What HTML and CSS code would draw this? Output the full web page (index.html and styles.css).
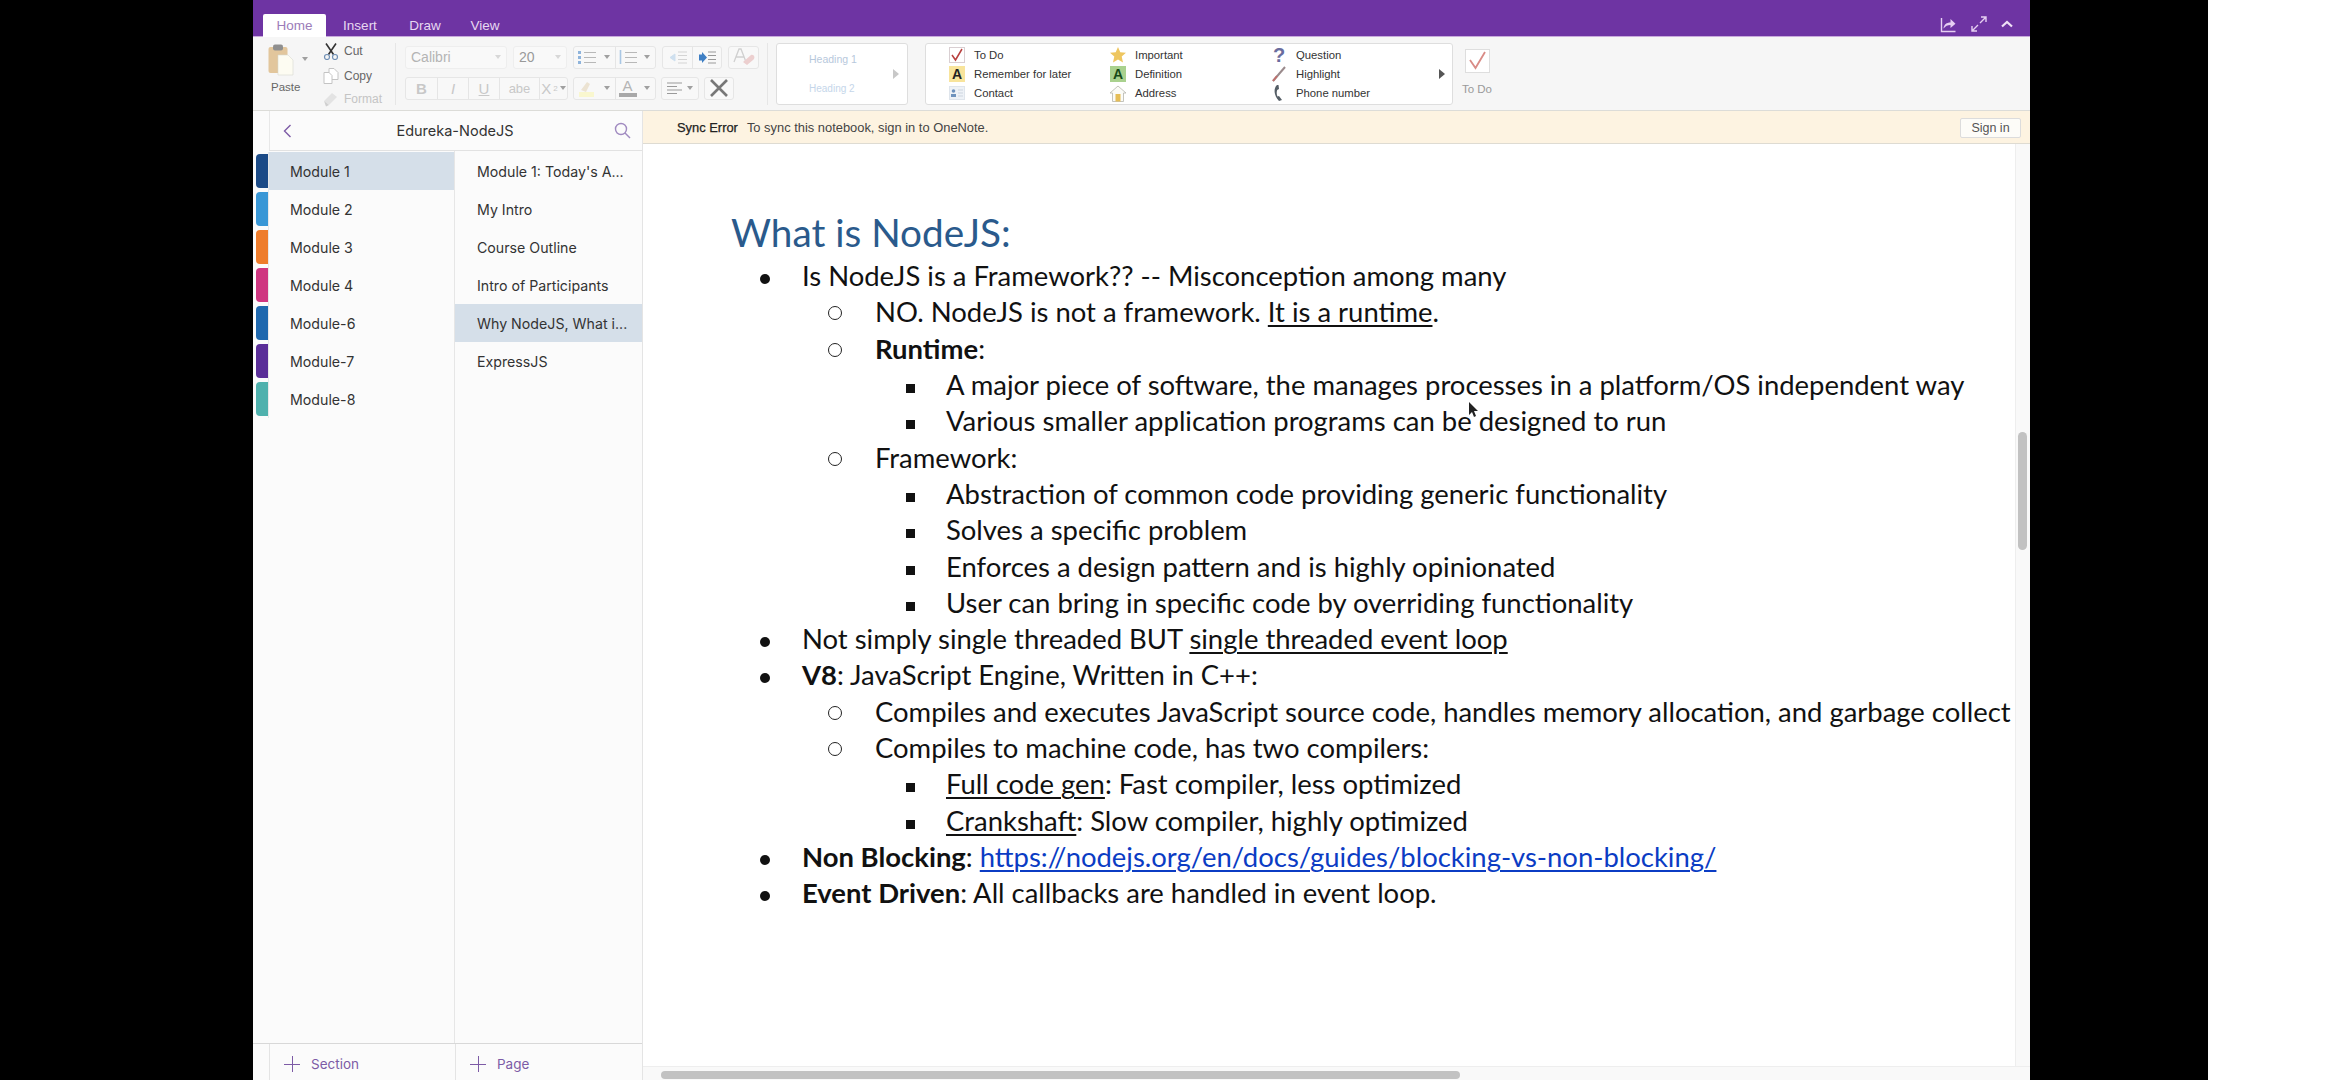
FILE: index.html
```html
<!DOCTYPE html>
<html lang="en">
  <head>
    <meta charset="UTF-8" />
    <meta name="viewport" content="width=device-width, initial-scale=1.0" />
    <title>Edureka-NodeJS - OneNote</title>
    <link rel="stylesheet" href="styles.css">
  </head>
  <body>
    <div class="app">
      <header class="titlebar">
        <nav class="tabs">
          <a class="tab active">Home</a>
          <a class="tab">Insert</a>
          <a class="tab">Draw</a>
          <a class="tab">View</a>
        </nav>
        <div class="window-actions">
          <svg width="17" height="17" viewBox="0 0 17 17" fill="none" stroke="#e6cff2" stroke-width="1.4"><path d="M1.5 2v13.5h14"/><path d="M3.5 12.5c.5-4 3-6 7-6V3l5 4.7-5 4.3V9c-3 0-5 1-7 3.5z" fill="#e6cff2" stroke="none"/></svg>
          <svg width="16" height="16" viewBox="0 0 16 16" fill="none" stroke="#e6cff2" stroke-width="1.4"><path d="M9 7l6-6M10 1h5v5M7 9l-6 6M1 10v5h5"/></svg>
          <svg width="12" height="8" viewBox="0 0 12 8" fill="none" stroke="#efe0f6" stroke-width="2.2"><path d="M1 6.5l5-4.5 5 4.5"/></svg>
        </div>
      </header>

      <section class="ribbon">
        <div class="clipboard">
          <div class="paste">
            <svg width="26" height="32" viewBox="0 0 26 32"><rect x="0.5" y="3" width="19" height="26" rx="2" fill="#e2c69c"/><rect x="5" y="0.5" width="10" height="6" rx="2" fill="#8f8f8f"/><path d="M10 11h10l5 5v15H10z" fill="#fdfcf2" stroke="#d8d8d0" stroke-width="0.6"/></svg>
            <span class="caret"></span>
            <span class="paste-label">Paste</span>
          </div>
          <ul class="clip-list">
            <li>
              <svg width="16" height="17" viewBox="0 0 16 17" fill="none"><path d="M3 0.5l7.5 11M13 0.5L5.5 11.500" stroke="#333" stroke-width="1.6"/><circle cx="4" cy="14" r="2.500" stroke="#6f8fb5" stroke-width="1.200"/><circle cx="12" cy="14" r="2.500" stroke="#6f8fb5" stroke-width="1.200"/></svg>
              <span>Cut</span>
            </li>
            <li>
              <svg width="16" height="16" viewBox="0 0 16 16" fill="#fff" stroke="#c4c4c4"><path d="M6 .5h5l4 4v7H6z"/><path d="M1 4.500h5l3 3v8H1z"/></svg>
              <span>Copy</span>
            </li>
            <li class="muted">
              <svg width="16" height="15" viewBox="0 0 16 15"><path d="M1 9l8-8 5 4-8 8z" fill="#e3e3e3"/><path d="M1 9l5 4-3 1.500z" fill="#cfcfcf"/></svg>
              <span>Format</span>
            </li>
          </ul>
        </div>

        <div class="formatting">
          <div class="tool-row">
            <div class="tool-group font-name"><span>Calibri</span><span class="caret light"></span></div>
            <div class="tool-group font-size"><span>20</span><span class="caret light"></span></div>
            <div class="tool-group">
              <span class="tool wide">
                <svg width="18" height="14" viewBox="0 0 18 14"><g fill="#8fb4dc"><rect x="0" y="1" width="3" height="3"/><rect x="0" y="6" width="3" height="3"/><rect x="0" y="11" width="3" height="3"/></g><path d="M6 2.500h12M6 7.500h12M6 12.500h12" stroke="#b8b8b8" stroke-width="1.200"/></svg>
              </span>
              <span class="tool narrow"><span class="caret"></span></span>
              <span class="tool wide">
                <svg width="18" height="14" viewBox="0 0 18 14"><path d="M1.500 0v14" stroke="#a9c7e4" stroke-width="1.600"/><path d="M6 2.500h12M6 7.500h12M6 12.500h12" stroke="#b8b8b8" stroke-width="1.200"/></svg>
              </span>
              <span class="tool narrow"><span class="caret"></span></span>
            </div>
            <div class="tool-group">
              <span class="tool indent">
                <svg width="18" height="13" viewBox="0 0 18 13"><path d="M6 6.500l-5 0M6 3L1 6.500 6 10z" fill="#cfe0ef" stroke="#cfe0ef"/><path d="M9 1h9M9 4.500h9M9 8.500h9M9 12h9" stroke="#d4d4d4" stroke-width="1.200"/></svg>
              </span>
              <span class="tool indent">
                <svg width="18" height="13" viewBox="0 0 18 13"><path d="M1 3.500h3V1l5 5.500L4 12V9.500H1z" fill="#3f7fc4"/><path d="M10 1h8M10 4.500h8M10 8.500h8M10 12h8" stroke="#999" stroke-width="1.200"/></svg>
              </span>
            </div>
            <div class="tool-group clear-style">
              <svg width="24" height="20" viewBox="0 0 24 20"><path d="M2 15L7 2h2l5 13M4 10h8" fill="none" stroke="#d0d0d0" stroke-width="1.300"/><path d="M11 15l8-7c3-1 5 3 2 5l-6 5z" fill="#eccfcf"/></svg>
            </div>
          </div>
          <div class="tool-row">
            <div class="tool-group">
              <span class="tool letter bold">B</span>
              <span class="tool letter italic">I</span>
              <span class="tool letter under">U</span>
              <span class="tool letter strike">abe</span>
              <span class="tool letter sub">X<sub>2</sub><span class="caret"></span></span>
            </div>
            <div class="tool-group">
              <span class="tool wide">
                <svg width="18" height="19" viewBox="0 0 18 19"><path d="M3 11l6-8 3 2-4 8z" fill="#ece3d2"/><rect x="1" y="13" width="15" height="5" fill="#f9f7cf"/></svg>
              </span>
              <span class="tool narrow"><span class="caret"></span></span>
              <span class="tool wide color-a">
                <span>A</span><i></i>
              </span>
              <span class="tool narrow"><span class="caret"></span></span>
            </div>
            <div class="tool-group align">
              <svg width="16" height="13" viewBox="0 0 16 13"><path d="M0 1h15M0 4.500h10M0 8h15M0 11.500h10" stroke="#9a9a9a" stroke-width="1.200"/></svg>
              <span class="caret"></span>
            </div>
            <div class="tool-group clear-format">
              <svg width="20" height="18" viewBox="0 0 20 18"><path d="M2 1l16 16M18 1L2 17" stroke="#777" stroke-width="2.600"/></svg>
            </div>
          </div>
        </div>

        <div class="gallery headings">
          <div class="heading-list">
            <span>Heading 1</span>
            <span class="second">Heading 2</span>
          </div>
          <span class="arrow pale"></span>
        </div>

        <div class="gallery tags">
          <div class="tag-grid">
            <div class="tag">
              <svg width="16" height="16" viewBox="0 0 16 16"><rect x="0.500" y="0.500" width="15" height="15" fill="#fff" stroke="#d9cfd2"/><path d="M3 8l3.500 5L13 2" fill="none" stroke="#b8403f" stroke-width="1.500"/></svg>
              <span>To Do</span>
            </div>
            <div class="tag">
              <svg width="16" height="16" viewBox="0 0 16 16"><path d="M8 0l2.300 5.300 5.700.5-4.300 3.800 1.300 5.900L8 12.400 3 15.500l1.300-5.900L0 5.800l5.700-.5z" fill="#eec660"/></svg>
              <span>Important</span>
            </div>
            <div class="tag">
              <span class="tag-glyph question">?</span>
              <span>Question</span>
            </div>
            <div class="tag">
              <span class="tag-letter later">A</span>
              <span>Remember for later</span>
            </div>
            <div class="tag">
              <span class="tag-letter definition">A</span>
              <span>Definition</span>
            </div>
            <div class="tag">
              <svg width="16" height="18" viewBox="0 0 16 18"><path d="M2 16L14 2" stroke="#9a8a8c" stroke-width="2"/><path d="M2 16l4-5" stroke="#c0706d" stroke-width="2"/></svg>
              <span>Highlight</span>
            </div>
            <div class="tag">
              <svg width="16" height="14" viewBox="0 0 16 14"><rect x="0.500" y="0.500" width="15" height="13" fill="#eef2f7" stroke="#dfe5ec"/><circle cx="4.500" cy="5" r="1.800" fill="#6f93bd"/><rect x="2" y="8" width="5" height="3" fill="#6f93bd"/><path d="M9 4h5M9 7h5M9 10h5" stroke="#cdd5df"/></svg>
              <span>Contact</span>
            </div>
            <div class="tag">
              <svg width="16" height="17" viewBox="0 0 16 17"><path d="M8 1L0 8h2.500v8.500h11V8H16z" fill="#fbfbf7" stroke="#b5b5ad" stroke-width="0.800"/><rect x="5.500" y="9" width="5" height="7.500" fill="#e5bd57"/></svg>
              <span>Address</span>
            </div>
            <div class="tag">
              <svg width="16" height="18" viewBox="0 0 16 18"><path d="M6 1C2.500 4 2.500 11 8 17l3-1-3-4-1.500.5c-1-2.500-1-4.500-.3-6.500L8 5 7.500 1z" fill="#555e66"/></svg>
              <span>Phone number</span>
            </div>
          </div>
          <span class="arrow"></span>
        </div>

        <div class="todo-button">
          <span class="todo-box">
            <svg width="19" height="19" viewBox="0 0 19 19"><path d="M2 9l5.500 8L17 1" fill="none" stroke="#d98b86" stroke-width="1.800"/></svg>
          </span>
          <span class="todo-label">To Do</span>
        </div>
      </section>

      <main class="workspace">
        <aside class="nav">
          <div class="nav-header">
            <svg width="9" height="14" viewBox="0 0 9 14" fill="none" stroke="#7d5ba6" stroke-width="1.400"><path d="M7.500 1L1.500 7l6 6"/></svg>
            <span class="notebook">Edureka-NodeJS</span>
            <svg width="17" height="17" viewBox="0 0 17 17" fill="none" stroke="#a08ac0" stroke-width="1.400"><circle cx="7" cy="7" r="5.500"/><path d="M11 11l5 5"/></svg>
          </div>
          <div class="nav-lists">
            <ul class="sections">
              <li class="section selected"><i class="c-navy"></i><span>Module 1</span></li>
              <li class="section"><i class="c-sky"></i><span>Module 2</span></li>
              <li class="section"><i class="c-orange"></i><span>Module 3</span></li>
              <li class="section"><i class="c-pink"></i><span>Module 4</span></li>
              <li class="section"><i class="c-blue"></i><span>Module-6</span></li>
              <li class="section"><i class="c-purple"></i><span>Module-7</span></li>
              <li class="section"><i class="c-teal"></i><span>Module-8</span></li>
            </ul>
            <ul class="pages">
              <li class="page-item">Module 1: Today's A...</li>
              <li class="page-item">My Intro</li>
              <li class="page-item">Course Outline</li>
              <li class="page-item">Intro of Participants</li>
              <li class="page-item selected">Why NodeJS, What i...</li>
              <li class="page-item">ExpressJS</li>
            </ul>
          </div>
          <div class="nav-footer">
            <div class="add add-section"><span class="plus"></span>Section</div>
            <div class="add add-page"><span class="plus"></span>Page</div>
          </div>
        </aside>

        <div class="content">
          <div class="sync-bar">
            <strong>Sync Error</strong>
            <span class="sync-text">To sync this notebook, sign in to OneNote.</span>
            <button class="sign-in">Sign in</button>
          </div>
          <div class="canvas-row">
            <article class="note">
              <h1>What is NodeJS:</h1>
              <ul class="outline">
                <li>Is NodeJS is a Framework?? -- Misconception among many
                  <ul>
                    <li>NO. NodeJS is not a framework. <u>It is a runtime</u>.</li>
                    <li><b>Runtime</b>:
                      <ul>
                        <li>A major piece of software, the manages processes in a platform/OS independent way</li>
                        <li>Various smaller application programs can be designed to run</li>
                      </ul>
                    </li>
                    <li>Framework:
                      <ul>
                        <li>Abstraction of common code providing generic functionality</li>
                        <li>Solves a specific problem</li>
                        <li>Enforces a design pattern and is highly opinionated</li>
                        <li>User can bring in specific code by overriding functionality</li>
                      </ul>
                    </li>
                  </ul>
                </li>
                <li>Not simply single threaded BUT <u>single threaded event loop</u></li>
                <li><b>V8</b>: JavaScript Engine, Written in C++:
                  <ul>
                    <li>Compiles and executes JavaScript source code, handles memory allocation, and garbage collect</li>
                    <li>Compiles to machine code, has two compilers:
                      <ul>
                        <li><u>Full code gen</u>: Fast compiler, less optimized</li>
                        <li><u>Crankshaft</u>: Slow compiler, highly optimized</li>
                      </ul>
                    </li>
                  </ul>
                </li>
                <li><b>Non Blocking</b>: <a class="link">https://nodejs.org/en/docs/guides/blocking-vs-non-blocking/</a></li>
                <li><b>Event Driven</b>: All callbacks are handled in event loop.</li>
              </ul>
              <svg class="pointer" width="10" height="16" viewBox="0 0 10 16"><path d="M1 0v13l3-3 2 5 2-1-2-5h4z" fill="#222"/></svg>
            </article>
            <div class="vscroll"><div class="vthumb"></div></div>
          </div>
          <div class="hscroll"><div class="hthumb"></div></div>
        </div>
      </main>
    </div>
    <div class="edge"></div>
  </body>
</html>
```

FILE: styles.css
```css
* {
  box-sizing: border-box;
}
html,
body {
  height: 100%;
}
body {
  margin: 0;
  background: #000;
  display: flex;
  justify-content: space-between;
  padding-left: 253px;
  overflow: hidden;
  font-family: "Liberation Sans", Arial, sans-serif;
}
ul {
  list-style: none;
  margin: 0;
  padding: 0;
}
.app {
  width: 1777px;
  height: 1080px;
  display: flex;
  flex-direction: column;
  background: #fff;
}
.edge {
  width: 132px;
  background: #fff;
}

/* purple title bar */
.titlebar {
  height: 36px;
  flex: none;
  background: #6e34a3;
  display: flex;
  justify-content: space-between;
  align-items: flex-end;
}
.tabs {
  display: flex;
  align-items: flex-end;
  padding-left: 10px;
  position: relative;
}
.tab {
  height: 23px;
  width: 63px;
  margin-bottom: -1px;
  position: relative;
  display: flex;
  align-items: center;
  justify-content: center;
  font-size: 13.5px;
  color: #e7d8f1;
}
.tab.active {
  background: #fff;
  color: #9c7cb9;
  border-radius: 2px 2px 0 0;
}
.tab:nth-child(2) {
  width: 68px;
}
.tab:nth-child(3) {
  width: 62px;
}
.tab:nth-child(4) {
  width: 58px;
}
.window-actions {
  display: flex;
  align-items: center;
  gap: 14px;
  height: 24px;
  padding-right: 17px;
}

/* ribbon */
.ribbon {
  height: 75px;
  flex: none;
  background: #f6f6f6;
  border-top: 1px solid #c8a9dc;
  border-bottom: 1px solid #dcdcd8;
  display: flex;
  align-items: center;
  padding-left: 15px;
}
.clipboard {
  width: 128px;
  height: 62px;
  display: flex;
  border-right: 1px solid #e6e6e6;
  flex: none;
}
.paste {
  width: 55px;
  display: flex;
  flex-wrap: wrap;
  align-items: center;
  align-content: flex-start;
  flex: none;
}
.paste svg {
  margin-top: 1px;
}
.paste .caret {
  margin-left: 8px;
}
.paste-label {
  width: 100%;
  padding-left: 3px;
  margin-top: 5px;
  font-size: 11.5px;
  color: #666;
}
.clip-list {
  display: flex;
  flex-direction: column;
  gap: 8px;
  font-size: 12px;
  color: #666;
}
.clip-list li {
  height: 17px;
  display: flex;
  align-items: center;
  gap: 5px;
}
.clip-list .muted {
  color: #c4c4c4;
}
.caret {
  display: inline-block;
  width: 0;
  height: 0;
  border-left: 3px solid transparent;
  border-right: 3px solid transparent;
  border-top: 4px solid #a0a0a0;
}
.caret.light {
  border-top-color: #d8d8d8;
}

.formatting {
  width: 372px;
  flex: none;
  padding-left: 9px;
  display: flex;
  flex-direction: column;
  gap: 8px;
  border-right: 1px solid #e6e6e6;
  height: 62px;
  padding-top: 3px;
}
.tool-row {
  display: flex;
  gap: 6px;
}
.tool-row:last-child {
  gap: 5px;
}
.tool-group {
  height: 23px;
  display: flex;
  align-items: center;
  border: 1px solid #e6e6e6;
  border-radius: 3px;
  background: #f8f8f8;
  color: #b4b4b4;
  font-size: 13px;
}
.font-name {
  width: 102px;
  justify-content: space-between;
  padding: 0 5px;
  background: #f9f9f9;
  border-color: #eeeeee;
  font-size: 14px;
}
.font-size {
  width: 54px;
  justify-content: space-between;
  padding: 0 5px;
  background: #f9f9f9;
  border-color: #eeeeee;
  font-size: 14px;
  color: #999;
}
.tool {
  height: 100%;
  display: flex;
  align-items: center;
  justify-content: center;
  border-left: 1px solid #e5e5e5;
}
.tool:first-child {
  border-left: none;
}
.tool.wide {
  width: 25px;
}
.tool.narrow {
  width: 15.500px;
  border-left: none;
}
.tool.indent {
  width: 29px;
}
.clear-style {
  width: 31px;
  justify-content: center;
}
.letter {
  width: 31px;
  font-size: 15px;
  color: #c8c8c8;
}
.bold {
  font-weight: bold;
}
.italic {
  font-style: italic;
}
.under {
  text-decoration: underline;
}
.strike {
  width: 40px;
  font-size: 13px;
}
.sub {
  width: 28px;
  gap: 2px;
  white-space: nowrap;
}
.sub sub {
  font-size: 8px;
}
.color-a {
  flex-direction: column;
  color: #b4b4b4;
  font-size: 15px;
  line-height: 14px;
}
.color-a i {
  width: 18px;
  height: 4px;
  background: #a8a8a8;
}
.align {
  width: 38px;
  justify-content: center;
  gap: 4px;
}
.clear-format {
  width: 30px;
  justify-content: center;
  background: #f8f8f8;
}

.gallery {
  height: 62px;
  margin-left: 8px;
  flex: none;
  background: #fff;
  border: 1px solid #dedede;
  border-radius: 3px;
  display: flex;
  align-items: center;
}
.headings {
  width: 132px;
  padding-left: 32px;
  margin-right: 17px;
  justify-content: space-between;
  padding-right: 8px;
}
.heading-list {
  display: flex;
  flex-direction: column;
  gap: 18px;
  font-size: 10.5px;
  color: #b7c8dc;
}
.heading-list .second {
  color: #c5d6ea;
  font-size: 10px;
}
.arrow {
  width: 0;
  height: 0;
  border-top: 5px solid transparent;
  border-bottom: 5px solid transparent;
  border-left: 6px solid #555;
}
.arrow.pale {
  border-left-color: #c8c8c8;
}
.tags {
  width: 528px;
  margin-left: 0;
  padding-left: 23px;
  padding-right: 7px;
  justify-content: space-between;
}
.tag-grid {
  display: grid;
  grid-template-columns: 161px 161px 140px;
  grid-auto-rows: 19px;
  margin-top: 1px;
  font-size: 11.300px;
  color: #333;
}
.tag {
  display: flex;
  align-items: center;
  gap: 9px;
}
.tag svg,
.tag-letter,
.tag-glyph {
  width: 16px;
  flex: none;
}
.tag-letter {
  height: 16px;
  display: flex;
  align-items: center;
  justify-content: center;
  font-weight: bold;
  font-size: 14px;
  color: #222;
}
.later {
  background: #f8e49c;
}
.definition {
  background: #a9d18e;
  color: #174a17;
}
.tag-glyph {
  text-align: center;
}
.question {
  font-size: 20px;
  font-weight: bold;
  color: #6a6d9e;
}
.todo-button {
  width: 34px;
  margin-left: 7px;
  height: 62px;
  display: flex;
  flex-direction: column;
  align-items: center;
  padding-top: 6px;
  flex: none;
}
.todo-box {
  width: 25px;
  height: 24px;
  background: #fff;
  border: 1px solid #dedede;
  display: flex;
  align-items: center;
  justify-content: center;
}
.todo-label {
  margin-top: 10px;
  font-size: 11.500px;
  color: #9a9a9a;
  white-space: nowrap;
}

/* notebook navigation */
.workspace {
  flex: 1;
  display: flex;
  min-height: 0;
}
.nav {
  width: 390px;
  flex: none;
  display: flex;
  flex-direction: column;
  background: #fbfbfb;
  border-right: 1px solid #e4e4e4;
  font-family: Inter, "Liberation Sans", sans-serif;
  font-size: 14.200px;
  color: #333;
}
.nav-header {
  height: 40px;
  flex: none;
  display: flex;
  align-items: center;
  justify-content: space-between;
  margin-left: 16px;
  padding: 0 11px 0 13px;
  border-bottom: 1px solid #e2e2e2;
  border-left: 1px solid #e8e8e8;
}
.notebook {
  font-size: 14.500px;
  padding-left: 4px;
}
.nav-lists {
  flex: 1;
  display: flex;
}
.sections {
  width: 202px;
  flex: none;
  padding-top: 1px;
  border-right: 1px solid #e6e6e6;
}
.section {
  height: 38px;
  display: flex;
  align-items: center;
}
.section i {
  width: 12px;
  height: 34px;
  margin-left: 3px;
  flex: none;
  border-radius: 4px 0 0 4px;
}
.section span {
  height: 100%;
  flex: 1;
  display: flex;
  align-items: center;
  padding-left: 21px;
  border-left: 1px solid #e8e8e8;
}
.section.selected span {
  background: #d5dfe9;
}
.c-navy {
  background: #1c4b87;
}
.c-sky {
  background: #3997d6;
}
.c-orange {
  background: #ee7c2b;
}
.c-pink {
  background: #cf3680;
}
.c-blue {
  background: #1f68ae;
}
.c-purple {
  background: #5a2e98;
}
.c-teal {
  background: #4fb1ad;
}
.pages {
  flex: 1;
  padding-top: 1px;
}
.page-item {
  height: 38px;
  display: flex;
  align-items: center;
  padding-left: 22px;
  white-space: nowrap;
}
.page-item.selected {
  background: #d5dfe9;
}
.nav-footer {
  height: 37px;
  flex: none;
  display: flex;
  border-top: 1px solid #d8d8d8;
  padding-left: 16px;
  color: #7d5ba6;
  font-size: 13.500px;
}
.add {
  display: flex;
  align-items: center;
  gap: 11px;
  border-left: 1px solid #e4e4e4;
  padding: 4px 0 0 14px;
}
.add-section {
  width: 186px;
}
.add-page {
  flex: 1;
}
.plus {
  width: 16px;
  height: 16px;
  background: linear-gradient(#7d5ba6, #7d5ba6) center / 16px 1px no-repeat,
    linear-gradient(#7d5ba6, #7d5ba6) center / 1px 16px no-repeat;
}

/* note area */
.content {
  flex: 1;
  min-width: 0;
  display: flex;
  flex-direction: column;
}
.sync-bar {
  height: 33px;
  flex: none;
  display: flex;
  align-items: center;
  padding: 1px 9px 0 34px;
  background: #fdf3e1;
  border-bottom: 1px solid #dedbd2;
  font-size: 12.900px;
  color: #444;
}
.sync-bar strong {
  font-weight: normal;
  color: #222;
  -webkit-text-stroke: 0.25px #222;
}
.sync-text {
  margin-left: 9px;
  flex: 1;
}
.sign-in {
  width: 61px;
  height: 20px;
  padding: 0;
  background: #fdfcf8;
  border: 1px solid #dcdcdc;
  border-radius: 2px;
  font-family: "Liberation Sans", Arial, sans-serif;
  font-size: 12.500px;
  color: #555;
}
.canvas-row {
  flex: 1;
  min-height: 0;
  display: flex;
}
.note {
  flex: 1;
  min-width: 0;
  overflow: hidden;
  position: relative;
  padding: 66px 0 0 88px;
  font-family: Lato, "Open Sans", sans-serif;
  font-size: 27.450px;
  line-height: 36.320px;
  color: #111;
  white-space: nowrap;
}
.note h1 {
  margin: 0 0 4px;
  font-size: 38.700px;
  line-height: 44px;
  font-weight: 400;
  color: #2a5a8c;
}
.outline {
  padding-left: 71px;
}
.outline ul {
  padding-left: 71px;
}
.outline ul ul {
  padding-left: 73px;
}
.outline > li::before,
.outline ul > li::before {
  content: "";
  display: inline-block;
  width: 10px;
  height: 10px;
  margin-left: -42px;
  margin-right: 32px;
  vertical-align: 2px;
  background: #111;
  border-radius: 50%;
}
.outline > li > ul > li::before {
  width: 12px;
  height: 12px;
  margin-left: -45px;
  margin-right: 33px;
  background: none;
  border: 1.500px solid #222;
}
.outline ul ul > li::before {
  width: 9px;
  height: 9px;
  margin-left: -40px;
  margin-right: 31px;
  border-radius: 0;
  background: #111;
}
.note u {
  text-decoration-thickness: 2px;
  text-underline-offset: 3px;
}
.link {
  color: #0b3cc4;
  text-decoration: underline;
  text-decoration-thickness: 2px;
  text-underline-offset: 3px;
}
.pointer {
  position: absolute;
  left: 825px;
  top: 258px;
}
.vscroll {
  width: 15px;
  flex: none;
  background: #f9f9f9;
  border-left: 1px solid #eee;
  padding: 288px 0 0 2px;
}
.vthumb {
  width: 9px;
  height: 118px;
  background: #c2c2c2;
  border-radius: 5px;
}
.hscroll {
  height: 14px;
  flex: none;
  background: #f9f9f9;
  border-top: 1px solid #eee;
  padding: 4px 0 0 18px;
}
.hthumb {
  width: 799px;
  height: 8px;
  background: #c2c2c2;
  border-radius: 4px;
}
```
